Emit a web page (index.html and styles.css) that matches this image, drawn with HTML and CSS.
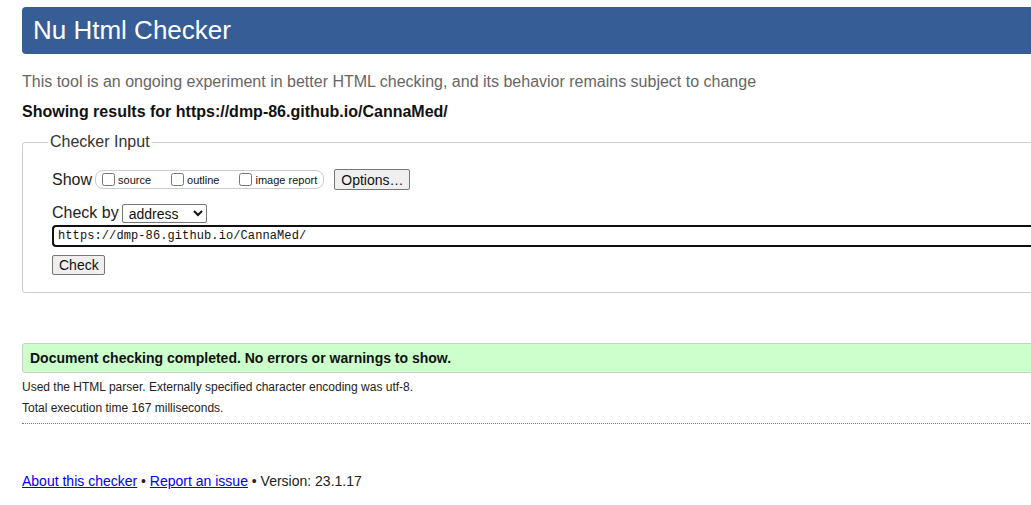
FILE: index.html
```html
<!DOCTYPE html>
<html lang="en">
<head>
<meta charset="utf-8">
<title>Nu Html Checker</title>
<link rel="stylesheet" href="styles.css">
</head>
<body>
<div class="page">
  <h1 class="banner">Nu Html Checker</h1>
  <p class="intro">This tool is an ongoing experiment in better HTML checking, and its behavior remains subject to change</p>
  <p class="showing">Showing results for https://dmp-86.github.io/CannaMed/</p>

  <fieldset class="input-box">
    <legend>Checker Input</legend>
    <div class="row show-row">
      <span class="lbl">Show</span>
      <span class="pill">
        <label class="opt opt-source"><input type="checkbox">source</label>
        <label class="opt opt-outline"><input type="checkbox">outline</label>
        <label class="opt"><input type="checkbox">image report</label>
      </span>
      <button class="btn options">Options…</button>
    </div>
    <div class="row by-row">
      <span class="lbl">Check by</span>
      <select class="sel"><option>address</option></select>
    </div>
    <div class="url">https://dmp-86.github.io/CannaMed/</div>
    <div class="row"><button class="btn check">Check</button></div>
  </fieldset>

  <div class="success">Document checking completed. No errors or warnings to show.</div>
  <div class="details">
    <p>Used the HTML parser. Externally specified character encoding was utf-8.</p>
    <p>Total execution time 167 milliseconds.</p>
  </div>

  <p class="footer"><a href="#">About this checker</a> • <a href="#">Report an issue</a> • Version: 23.1.17</p>
</div>
</body>
</html>
```
FILE: styles.css
```css
html, body {
  margin: 0;
  padding: 0;
  overflow: hidden;
  background: #fff;
}
body {
  font-family: "Liberation Sans", Arial, sans-serif;
  color: #111;
}
.page {
  width: 1100px;
  padding: 7px 0 0 22px;
}
.banner {
  margin: 0;
  height: 47px;
  line-height: 46px;
  background: #365d95;
  color: #fff;
  font-weight: normal;
  font-size: 26px;
  padding-left: 11px;
  border-radius: 4px;
}
.intro {
  margin: 19px 0 0;
  font-size: 16px;
  line-height: 18px;
  color: #666;
}
.showing {
  margin: 12px 0 0;
  font-size: 16px;
  line-height: 18px;
  font-weight: bold;
}
.input-box {
  margin: 12px 0 0;
  border: 1px solid #ccc;
  border-radius: 3px;
  padding: 0 0 17px 29px;
  min-width: 0;
}
.input-box legend {
  font-size: 16px;
  line-height: 18px;
  color: #333;
  padding: 0 2px;
  margin-left: -4px;
}
.row {
  display: flex;
  align-items: center;
}
.lbl {
  font-size: 16px;
  color: #222;
}
.show-row {
  margin-top: 18px;
  height: 21px;
}
.pill {
  display: inline-flex;
  align-items: center;
  height: 17px;
  border: 1px solid #ccc;
  border-radius: 8px;
  margin-left: 3px;
  padding: 0 6px 0 6px;
  font-size: 11px;
  color: #111;
}
.opt {
  display: inline-flex;
  align-items: center;
}
.opt input {
  margin: 0 3px 0 0;
  width: 13px;
  height: 13px;
}
.opt-source { margin-right: 20px; }
.opt-outline { margin-right: 20px; }
.btn {
  font-family: "Liberation Sans", Arial, sans-serif;
  font-size: 14px;
  color: #111;
  background: #efefef;
  border: 1px solid #767676;
  border-radius: 2px;
  padding: 0 6px;
  height: 21px;
}
.options {
  margin-left: 10px;
  width: 76px;
}
.by-row {
  margin-top: 14px;
  height: 18px;
}
.sel {
  margin-left: 3px;
  width: 85px;
  height: 19px;
  font-family: "Liberation Sans", Arial, sans-serif;
  font-size: 14px;
  color: #111;
  border: 1px solid #767676;
  border-radius: 2px;
  background: #fff;
  padding: 0 2px;
}
.url {
  margin-top: 3px;
  height: 18px;
  border: 2px solid #101010;
  border-right: none;
  border-radius: 4px 0 0 4px;
  font-family: "Liberation Mono", "DejaVu Sans Mono", monospace;
  font-size: 12px;
  letter-spacing: 0.1px;
  line-height: 18px;
  padding-left: 4px;
  color: #111;
}
.check {
  margin-top: 8px;
  height: 20px;
  width: 53px;
}
.success {
  margin-top: 50px;
  height: 28px;
  line-height: 28px;
  background: #ccffcc;
  border: 1px solid #ccc;
  border-radius: 3px;
  padding-left: 7px;
  font-size: 14px;
  font-weight: bold;
  color: #111;
}
.details {
  margin-top: 4px;
  border-bottom: 1px dotted #777;
  padding-bottom: 4px;
}
.details p {
  margin: 0;
  font-size: 12px;
  line-height: 21px;
  color: #222;
}
.footer {
  margin: 49px 0 0;
  font-size: 14px;
  line-height: 17px;
  color: #222;
}
.footer a {
  color: #0000ee;
}
```
